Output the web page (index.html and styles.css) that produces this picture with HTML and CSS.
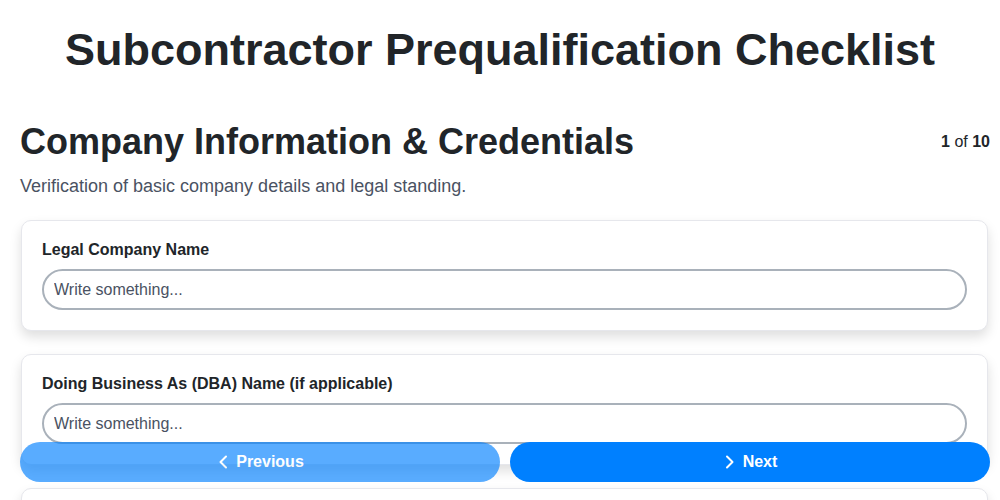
FILE: index.html
```html
<!DOCTYPE html>
<html lang="en">
<head>
    <meta charset="UTF-8">
    <meta name="viewport" content="width=device-width, initial-scale=1.0">
    <title>Subcontractor Prequalification Checklist</title>
    <link rel="stylesheet" href="styles.css">
</head>
<body>
    <h1 class="page-title">Subcontractor Prequalification Checklist</h1>

    <div class="container">
        <div class="section-header">
            <h2>Company Information &amp; Credentials</h2>
            <div class="step-count"><strong>1</strong> of <strong>10</strong></div>
        </div>
        <p class="section-desc">Verification of basic company details and legal standing.</p>

        <div class="questions">
            <div class="card">
                <label for="legalName">Legal Company Name</label>
                <input type="text" id="legalName" placeholder="Write something...">
            </div>
            <div class="card">
                <label for="dbaName">Doing Business As (DBA) Name (if applicable)</label>
                <input type="text" id="dbaName" placeholder="Write something...">
            </div>
            <div class="card">
                <label for="address">Business Address</label>
                <input type="text" id="address" placeholder="Write something...">
            </div>
        </div>
    </div>

    <div class="nav-bar">
        <button class="btn btn-prev">
            <svg width="14" height="16" viewBox="0 0 14 16" fill="none" stroke="currentColor" stroke-width="2" stroke-linecap="round" stroke-linejoin="round"><path d="M10 2.5 4.5 8l5.5 5.5"/></svg>
            Previous
        </button>
        <button class="btn btn-next">
            <svg width="14" height="16" viewBox="0 0 14 16" fill="none" stroke="currentColor" stroke-width="2" stroke-linecap="round" stroke-linejoin="round"><path d="M4 2.5 9.5 8 4 13.5"/></svg>
            Next
        </button>
    </div>
</body>
</html>
```

FILE: styles.css
```css
body {
    font-family: 'Liberation Sans', Arial, sans-serif;
    margin: 0;
    padding: 0;
    background-color: #fff;
    color: #212529;
}

.page-title {
    margin: 24px 0 0;
    text-align: center;
    font-size: 45px;
    line-height: normal;
    font-weight: bold;
    color: #212529;
}

.container {
    padding: 0 10px 120px 20px;
}

.section-header {
    display: flex;
    justify-content: space-between;
    align-items: center;
    margin-top: 45px;
}

.section-header h2 {
    margin: 0;
    font-size: 36px;
    line-height: normal;
}

.step-count {
    font-size: 16px;
    color: #212529;
}

.section-desc {
    margin: 13px 0 0;
    font-size: 18px;
    line-height: normal;
    color: #4a5262;
}

.questions {
    display: flex;
    flex-direction: column;
    gap: 23px;
    margin-top: 23px;
    padding: 0 2px 0 1px;
}

.card {
    background: #fff;
    border: 1px solid #e6e7ec;
    border-radius: 10px;
    padding: 20px;
    box-shadow: 0 6px 12px rgba(0, 0, 0, 0.13);
}

.card label {
    display: block;
    font-size: 16px;
    font-weight: bold;
    line-height: normal;
    margin-bottom: 10px;
}

.card input {
    display: block;
    box-sizing: border-box;
    width: 100%;
    height: 41px;
    padding: 0 10px;
    border: 2px solid #a9b1ba;
    border-radius: 21px;
    font-family: inherit;
    font-size: 16px;
    color: #212529;
    background: #fff;
    outline: none;
}

.card input::placeholder {
    color: #4a5262;
    opacity: 1;
}

.nav-bar {
    position: fixed;
    left: 20px;
    right: 10px;
    bottom: 18px;
    display: flex;
    gap: 10px;
}

.btn {
    flex: 1;
    height: 40px;
    display: flex;
    align-items: center;
    justify-content: center;
    gap: 6px;
    border: none;
    border-radius: 20px;
    background-color: #0080ff;
    color: #fff;
    font-family: inherit;
    font-size: 16px;
    font-weight: bold;
    cursor: pointer;
}

.btn-prev {
    opacity: 0.65;
}
```
